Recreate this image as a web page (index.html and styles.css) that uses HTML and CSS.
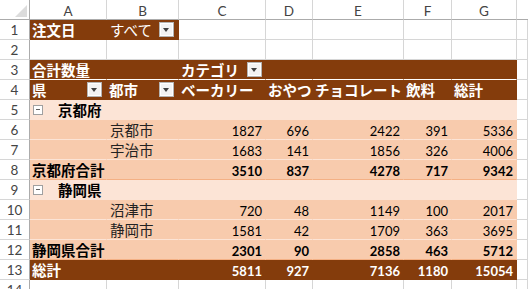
FILE: index.html
```html
<!DOCTYPE html>
<html lang="ja">
<head>
<meta charset="utf-8">
<link rel="stylesheet" href="styles.css">
</head>
<body>
<div class="sheet">
  <!-- header row -->
  <div class="corner"><svg width="30" height="20" viewBox="0 0 30 20"><polygon points="27,5 27,17 15,17" fill="#dcdcdc"/></svg></div>
  <div class="hd">A</div><div class="hd">B</div><div class="hd">C</div><div class="hd">D</div><div class="hd">E</div><div class="hd">F</div><div class="hd">G</div><div class="hd end"></div>

  <!-- row 1 -->
  <div class="rn">1</div>
  <div class="cell br b jp">注文日</div>
  <div class="cell br jp sel"><span class="all">すべて</span><span class="dd"></span></div>
  <div class="cell"></div><div class="cell"></div><div class="cell"></div><div class="cell"></div><div class="cell"></div><div class="cell"></div>

  <!-- row 2 -->
  <div class="rn">2</div>
  <div class="cell"></div><div class="cell"></div><div class="cell"></div><div class="cell"></div><div class="cell"></div><div class="cell"></div><div class="cell"></div><div class="cell"></div>

  <!-- row 3 -->
  <div class="rn">3</div>
  <div class="cell br b jp sw">合計数量</div>
  <div class="cell br sw"></div>
  <div class="cell br b jp sw">カテゴリ<span class="dd gap"></span></div>
  <div class="cell br sw"></div><div class="cell br sw"></div><div class="cell br sw"></div><div class="cell br sw"></div>
  <div class="cell"></div>

  <!-- row 4 -->
  <div class="rn">4</div>
  <div class="cell br b jp">県<span class="dd"></span></div>
  <div class="cell br b jp">都市<span class="dd"></span></div>
  <div class="cell br b jp">ベーカリー</div>
  <div class="cell br b jp">おやつ</div>
  <div class="cell br b jp">チョコレート</div>
  <div class="cell br b jp">飲料</div>
  <div class="cell br b jp">総計</div>
  <div class="cell"></div>

  <!-- row 5 -->
  <div class="rn">5</div>
  <div class="cell lt b jp"><span class="mn"></span>京都府</div>
  <div class="cell lt"></div><div class="cell lt"></div><div class="cell lt"></div><div class="cell lt"></div><div class="cell lt"></div><div class="cell lt"></div>
  <div class="cell"></div>

  <!-- row 6 -->
  <div class="rn">6</div>
  <div class="cell md sl"></div>
  <div class="cell md sl jp city">京都市</div>
  <div class="cell md sl num">1827</div>
  <div class="cell md sl num">696</div>
  <div class="cell md sl num">2422</div>
  <div class="cell md sl num">391</div>
  <div class="cell md sl num">5336</div>
  <div class="cell"></div>

  <!-- row 7 -->
  <div class="rn">7</div>
  <div class="cell md sl"></div>
  <div class="cell md sl jp city">宇治市</div>
  <div class="cell md sl num">1683</div>
  <div class="cell md sl num">141</div>
  <div class="cell md sl num">1856</div>
  <div class="cell md sl num">326</div>
  <div class="cell md sl num">4006</div>
  <div class="cell"></div>

  <!-- row 8 -->
  <div class="rn">8</div>
  <div class="cell md sd b jp">京都府合計</div>
  <div class="cell md sd"></div>
  <div class="cell md sd num b">3510</div>
  <div class="cell md sd num b">837</div>
  <div class="cell md sd num b">4278</div>
  <div class="cell md sd num b">717</div>
  <div class="cell md sd num b">9342</div>
  <div class="cell"></div>

  <!-- row 9 -->
  <div class="rn">9</div>
  <div class="cell lt b jp"><span class="mn"></span>静岡県</div>
  <div class="cell lt"></div><div class="cell lt"></div><div class="cell lt"></div><div class="cell lt"></div><div class="cell lt"></div><div class="cell lt"></div>
  <div class="cell"></div>

  <!-- row 10 -->
  <div class="rn">10</div>
  <div class="cell md sl"></div>
  <div class="cell md sl jp city">沼津市</div>
  <div class="cell md sl num">720</div>
  <div class="cell md sl num">48</div>
  <div class="cell md sl num">1149</div>
  <div class="cell md sl num">100</div>
  <div class="cell md sl num">2017</div>
  <div class="cell"></div>

  <!-- row 11 -->
  <div class="rn">11</div>
  <div class="cell md sl"></div>
  <div class="cell md sl jp city">静岡市</div>
  <div class="cell md sl num">1581</div>
  <div class="cell md sl num">42</div>
  <div class="cell md sl num">1709</div>
  <div class="cell md sl num">363</div>
  <div class="cell md sl num">3695</div>
  <div class="cell"></div>

  <!-- row 12 -->
  <div class="rn">12</div>
  <div class="cell md sd b jp">静岡県合計</div>
  <div class="cell md sd"></div>
  <div class="cell md sd num b">2301</div>
  <div class="cell md sd num b">90</div>
  <div class="cell md sd num b">2858</div>
  <div class="cell md sd num b">463</div>
  <div class="cell md sd num b">5712</div>
  <div class="cell"></div>

  <!-- row 13 -->
  <div class="rn">13</div>
  <div class="cell br b jp">総計</div>
  <div class="cell br"></div>
  <div class="cell br num b">5811</div>
  <div class="cell br num b">927</div>
  <div class="cell br num b">7136</div>
  <div class="cell br num b">1180</div>
  <div class="cell br num b">15054</div>
  <div class="cell"></div>

  <!-- row 14 -->
  <div class="rn">14</div>
  <div class="cell"></div><div class="cell"></div><div class="cell"></div><div class="cell"></div><div class="cell"></div><div class="cell"></div><div class="cell"></div><div class="cell"></div>
</div>
</body>
</html>
```

FILE: styles.css
```css
html, body {
  margin: 0;
  padding: 0;
  background: #ffffff;
  overflow: hidden;
}

.sheet {
  display: grid;
  grid-template-columns: 30px 77px 72px 87px 47px 91px 48px 65px 11px;
  grid-auto-rows: 20px;
  width: 528px;
  font-family: "Lato", "Noto Sans CJK JP", sans-serif;
  font-size: 13px;
  color: #000000;
}

.sheet > div {
  box-sizing: border-box;
  white-space: nowrap;
}

.corner {
  border-right: 1px solid #ababab;
  border-bottom: 1px solid #ababab;
  overflow: hidden;
}
.corner svg { display: block; }

.hd {
  display: flex;
  align-items: center;
  justify-content: center;
  color: #444444;
  font-size: 13.5px;
  border-right: 1px solid #d6d6d6;
  border-bottom: 1px solid #ababab;
  padding-top: 2px;
}
.hd.end { border-right: none; }

.rn {
  display: flex;
  align-items: center;
  justify-content: center;
  color: #444444;
  font-size: 13.5px;
  border-right: 1px solid #ababab;
  border-bottom: 1px solid #d6d6d6;
  padding-top: 1px;
}

.cell {
  display: flex;
  align-items: center;
  padding: 1px 2px 0 2px;
  border-right: 1px solid #d6d6d6;
  border-bottom: 1px solid #d6d6d6;
}

.jp {
  font-family: "Noto Sans CJK JP", sans-serif;
  font-size: 14.5px;
  padding-top: 0;
}

.b { font-weight: 700; }

.num {
  justify-content: flex-end;
  padding-right: 3px;
  padding-top: 2px;
}

/* pivot fills */
.br {
  background: #843c0c;
  color: #ffffff;
  border-right-color: #843c0c;
  border-bottom-color: #843c0c;
}
.lt {
  background: #fce4d6;
  border-right-color: #fce4d6;
  border-bottom-color: #fce4d6;
}
.md {
  background: #f8cbad;
  border-right-color: #f8cbad;
  border-bottom-color: #f8cbad;
}
.sw { border-bottom-color: #ffffff; }
.sl { border-bottom-color: #fce4d6; }
.sd { border-bottom-color: #f4b084; }

.city {
  padding-left: 3px;
  color: #222222;
}

.sel { padding-left: 3px; }
.all { font-weight: 400; }

/* filter dropdown button */
.dd {
  position: relative;
  flex: none;
  width: 15px;
  height: 15px;
  box-sizing: border-box;
  margin-left: auto;
  margin-right: 2px;
  background: #f3f3f3;
  border: 1px solid #b4b4b4;
  box-shadow: inset 0 0 0 1px #ffffff;
}
.dd.gap { margin-left: 8px; }
.dd::after {
  content: "";
  position: absolute;
  left: 3px;
  top: 5px;
  border-left: 3.5px solid transparent;
  border-right: 3.5px solid transparent;
  border-top: 4px solid #404040;
}

/* collapse (minus) box */
.mn {
  position: relative;
  flex: none;
  width: 10px;
  height: 10px;
  box-sizing: border-box;
  margin-left: 1px;
  margin-right: 15px;
  background: #ffffff;
  border: 1px solid #a0a0a0;
}
.mn::after {
  content: "";
  position: absolute;
  left: 2px;
  top: 3.5px;
  width: 4px;
  height: 1px;
  background: #606060;
}
```
